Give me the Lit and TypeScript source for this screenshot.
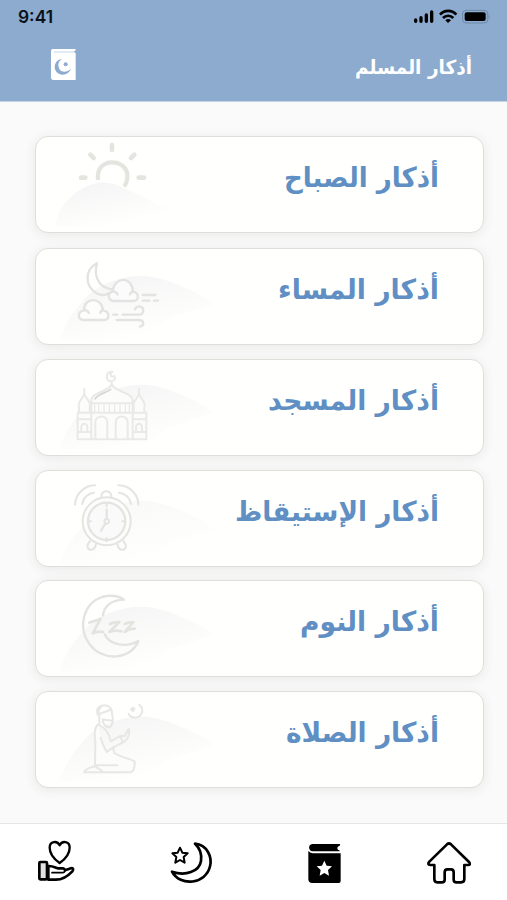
import { LitElement, html, css, svg } from "lit";
import { customElement, property } from "lit/decorators.js";

type Art = "sun" | "wind" | "mosque" | "alarm" | "sleep" | "prayer";

const wideHill = (y: number, strength = 1) => svg`
  <path transform="translate(0 ${y})" fill="url(#hill)" opacity=${strength}
    d="M90 200 C100 155 125 120 160 80 C200 30 270 8 330 6 C390 6 440 30 480 48 C515 62 530 76 550 90 C500 110 450 120 405 140 C380 165 350 186 320 200 Z"/>`;

const arts: Record<Art, { top: number; body: unknown }> = {
  sun: {
    top: 21,
    body: svg`
      <path fill="url(#hill)" d="M75 292 C82 240 110 205 150 180 C190 155 225 152 262 166 C300 182 350 208 420 240 C360 262 280 280 200 292 Z"/>
      <g stroke="#e5e5e0" stroke-width="13" stroke-linecap="butt">
        <path d="M204 150 C200 118 218 97 246 97 C276 97 294 118 292 142 C291 155 288 162 283 170"/>
        <path stroke-linecap="round" stroke-width="14" d="M246 45v15M181 74l10 10M313 74l-10 10M153 143h13M326 143h16"/>
      </g>`,
  },
  wind: {
    top: 27,
    body: svg`${wideHill(102)}
      <g stroke="#e3e3e1" stroke-width="7">
        <path d="M201 70 C166 88 160 138 202 161 C214 167 226 166 237 160 M201 70 C190 108 206 146 250 148"/>
        <path fill="#fbfbfb" d="M252 183 C234 182 230 160 248 154 C252 110 306 106 309 155 C328 158 328 183 310 183 Z"/>
        <path fill="#fdfdfc" d="M160 240 C142 238 142 214 162 211 C162 170 216 170 219 211 C240 214 240 240 222 240 Z"/>
        <path d="M162 211c8-2 12 2 14 8M219 211c-6 0-8 4-8 8M248 154c8 0 13 4 15 10M309 155c-6 0-8 4-9 8"/>
        <path d="M338 165h38M338 182h20M372 182h12M250 224h12M278 224H326C343 224 345 199 328 199C320 199 317 203 315 208M260 240H326C343 240 344 256 330 260"/>
      </g>`,
  },
  mosque: {
    top: 30,
    body: svg`${wideHill(98)}
      <g stroke="#e9e9e7" stroke-width="6">
        <path fill="#fcfcfb" stroke="none" d="M143 268V160L163 134L184 148Q190 130 245 108Q300 130 306 148L327 134L348 160V268Z"/>
        <path d="M143 268V188H349V268ZM143 208H184M308 208H349M143 246H184M308 246H349M184 160V268M308 160V268M184 160H308"/>
        <path stroke-width="4" d="M194 165v22M206 165v22M222 165v22M238 165v22M254 165v22M270 165v22M286 165v22M298 165v22"/>
        <path d="M184 158C178 126 228 130 245 104C262 130 312 126 308 158M147 187V172C141 152 159 150 163 130C167 150 185 152 179 172V187M311 187V172C305 152 323 150 327 130C331 150 349 152 343 172V187"/>
        <path d="M196 268V216C198 194 230 194 232 216V268M257 268V216C259 194 291 194 293 216V268M154 246V230C156 218 170 218 172 230V246M318 246V230C320 218 334 218 336 230V246"/>
        <path d="M163 117v10M327 117v10M245 94v8M243 65C226 68 226 92 243 94C254 94 257 84 253 78C244 84 236 74 247 65"/>
        <path stroke="#d6d7d5" stroke-width="5" d="M195 147C203 132 222 132 242 118"/>
      </g>`,
  },
  alarm: {
    top: 25,
    body: svg`${wideHill(108, 0.6)}
      <g stroke="#e4e4e1" stroke-width="6">
        <circle cx="230" cy="176" r="72" fill="#fdfdfc"/>
        <circle cx="230" cy="176" r="56" fill="#fafafa" stroke-width="7"/>
        <path d="M214 103C212 80 246 80 244 103M230 121v10M230 226v10M175 176h8M277 176h8"/>
        <circle cx="230" cy="176" r="7"/>
        <path d="M230 140v29M226 183L213 204" stroke-width="7"/>
        <path d="M135 126C136 96 162 68 195 68M157 124C159 106 174 92 192 90M265 68C300 68 325 96 325 126M267 90C286 92 300 106 303 124"/>
        <path d="M180 235C166 252 174 262 184 261C194 260 197 250 198 244M280 235C294 252 286 262 276 261C266 260 263 250 262 244"/>
      </g>`,
  },
  sleep: {
    top: 27,
    body: svg`${wideHill(98)}
      <g stroke="#e3e3e0" stroke-width="7">
        <path d="M219 130C222 104 242 84 282 83C264 70 236 70 216 75C160 94 142 166 178 216C220 272 304 262 325 207C292 226 240 222 224 187"/>
        <path stroke-width="8" d="M178 152C190 146 200 146 212 140L188 184C198 178 208 178 219 180M240 156C250 150 260 150 268 150L238 180C252 174 260 174 274 178M284 156C292 152 300 150 310 150L284 180C294 172 304 170 314 170"/>
      </g>`,
  },
  prayer: {
    top: 30,
    body: svg`${wideHill(98)}
      <g stroke="#e7e7e4" stroke-width="6">
        <path fill="#fcfcfb" d="M204 128C191 138 194 160 196 180L195 252C186 256 162 260 163 271H302C312 268 315 258 314 238C298 230 264 222 252 212L250 196L230 210C222 196 216 184 212 168"/>
        <path d="M204 128C226 136 238 156 242 178L270 162M250 196L285 178C296 168 300 152 296 140L284 162L270 162L278 178M197 250H262M195 252C206 264 216 262 218 270"/>
        <path d="M202 94C198 76 212 70 224 70C242 72 247 84 246 96C250 108 250 132 238 136C226 136 218 124 218 112M203 98L240 84M208 98V128M216 72C206 80 204 90 208 98M222 112C230 118 238 112 244 116"/>
        <path d="M328 68C344 82 336 106 316 107C306 107 299 103 296 96"/>
        <path stroke-width="8" d="M304 82l8-1M309 78v8"/>
      </g>`,
  },
};

@customElement("adhkar-card")
class AdhkarCard extends LitElement {
  @property() label = "";
  @property() art: Art = "sun";
  @property({ type: Number }) span = 150;

  static styles = css`
    :host {
      display: flex;
      box-sizing: border-box;
      justify-content: space-between;
      height: 97px;
      flex: none;
      border: 1px solid #dededa;
      border-radius: 13px;
      background: #fffffe;
      box-shadow: 0 2px 12px rgba(60, 60, 40, 0.09);
      overflow: hidden;
    }
    .art {
      width: 190px;
      height: 95px;
      flex: none;
    }
    .title {
      width: 210px;
      height: 80px;
      flex: none;
      margin-right: 44.500px;
      overflow: visible;
    }
    .title text {
      font: 700 27.500px "DejaVu Sans", "Noto Sans", sans-serif;
      fill: #5f8fc3;
    }
  `;

  render() {
    const art = arts[this.art];
    return html`
      <svg class="art" viewBox="18 ${art.top} 570 285" fill="none" stroke-linecap="round" stroke-linejoin="round">
        <defs>
          <linearGradient id="hill" x1="0.3" y1="0.1" x2="0.72" y2="0.85">
            <stop offset="0" stop-color="#f6f6f6" />
            <stop offset="1" stop-color="#fffffe" />
          </linearGradient>
        </defs>
        ${art.body}
      </svg>
      <svg class="title" viewBox="0 0 210 80">
        <text x="210" y="49.500" direction="rtl" textLength=${this.span} lengthAdjust="spacingAndGlyphs">${this.label}</text>
      </svg>
    `;
  }
}

@customElement("app-root")
class AppRoot extends LitElement {
  static styles = css`
    :host {
      display: flex;
      flex-direction: column;
      width: 507px;
      height: 900px;
      background: #fafafa;
      overflow: hidden;
    }
    .header {
      height: 101px;
      flex: none;
      background: #8cabce;
      border-bottom: 1px solid #c5d5e6;
      box-sizing: content-box;
    }
    .status {
      display: flex;
      justify-content: space-between;
      height: 32px;
      padding: 0 15px 0 18px;
    }
    .clock {
      font: 600 17.4px/34px Inter, sans-serif;
      color: #0b1118;
    }
    .signals {
      width: 82px;
      height: 22px;
      margin-top: 5px;
    }
    .bar {
      display: flex;
      justify-content: space-between;
      padding: 12px 35px 0 47px;
    }
    .quran {
      width: 32px;
      height: 40px;
    }
    .heading {
      width: 160px;
      height: 44px;
      overflow: visible;
    }
    .heading text {
      font: 700 19.5px "DejaVu Sans", "Noto Sans", sans-serif;
      fill: #fff;
    }
    .list {
      flex: 1;
      display: flex;
      flex-direction: column;
      gap: 13.8px;
      padding: 34px 23px 0 35px;
    }
    .list > :first-child {
      margin-bottom: 1.2px;
    }
    .nav {
      display: grid;
      grid-template-columns: 136px 133px 124px 44px;
      box-sizing: border-box;
      height: 77px;
      flex: none;
      padding: 16px 0 0 34px;
      border-top: 1px solid #e6e6e6;
      background: #fff;
    }
    .tab {
      width: 44px;
      height: 44px;
    }
  `;

  private tabs = [
    {
      x: 102,
      body: svg`
        <path stroke-width="7" d="M179 144C165 134 149 118 149 98C149 78 172 76 179 91C186 76 209 78 209 98C209 118 193 134 179 144Z"/>
        <rect x="118" y="141" width="23" height="52" rx="3" fill="#e2e2e2" stroke-width="8"/>
        <path stroke-width="8" d="M145 153C156 152 164 157 173 160H189Q194 161 195 166L213 160C220 158 221 164 217 169C202 185 186 194 168 194H145Z"/>
        <path stroke-width="5" d="M156 173H188Q194 173 195 166"/>`,
    },
    {
      x: 510,
      body: svg`
        <path stroke-width="8" d="M585 86C622 90 637 126 630 154C618 208 540 216 516 170C556 184 598 170 603 138C606 118 600 100 585 86Z"/>
        <path stroke-width="6" d="M540 98L547 113L563 115L551 126L554 143L540 135L526 143L529 126L517 115L533 113Z"/>`,
    },
    {
      x: 147,
      body: svg`
        <path fill="#000" stroke="none" d="M175 87H257Q260 88 257 92Q246 96 252 104Q260 108 256 109H176C163 109 161 88 175 87Z"/>
        <path fill="#000" stroke="none" d="M163 108Q168 114 176 115H260V198Q260 204 254 204H175Q163 204 163 193Z"/>
        <path fill="#fff" stroke="none" d="M211 137L218 152L234 154L222 165L225 182L211 174L197 182L200 165L188 154L204 152Z"/>`,
    },
    {
      x: 519,
      body: svg`
        <path stroke-width="8" d="M579 88Q585 83 591 88L645 141Q652 150 642 150H631V192Q631 202 621 202H608Q599 202 599 194V172Q599 163 591 163H580Q572 163 572 172V194Q572 202 563 202H550Q541 202 541 192V150H529Q519 149 526 140Z"/>`,
    },
  ];

  private cards: { label: string; art: Art; span: number }[] = [
    { label: "أذكار الصباح", art: "sun", span: 155 },
    { label: "أذكار المساء", art: "wind", span: 161 },
    { label: "أذكار المسجد", art: "mosque", span: 171 },
    { label: "أذكار الإستيقاظ", art: "alarm", span: 204 },
    { label: "أذكار النوم", art: "sleep", span: 139 },
    { label: "أذكار الصلاة", art: "prayer", span: 153 },
  ];

  render() {
    return html`
      <header class="header">
        <div class="status">
          <span class="clock">9:41</span>
          <svg class="signals" viewBox="468 15 246 66" fill="none">
            <path stroke="#000" stroke-width="10" stroke-linecap="round" d="M485 60v4M501 53v11M517 45v19M533 36v28" />
            <path stroke="#000" stroke-width="8" d="M558 44C572 29 593 29 607 44M567 54C576 45 589 45 598 54" />
            <path fill="#000" d="M574 61C579 56 586 56 591 61L582 69Z" />
            <rect x="625.500" y="31" width="76" height="38" rx="11" stroke="#6e89a7" stroke-width="3" />
            <rect x="632" y="37" width="63" height="26" rx="6" fill="#000" />
            <path fill="#6e89a7" d="M705 44Q710 50 705 56Z" />
          </svg>
        </div>
        <div class="bar">
          <svg class="quran" viewBox="141 132 96 120">
            <path fill="#fff" d="M158 147H227V151L221 155L227 160V240H160Q153 240 153 232V153Q153 147 158 147Z" />
            <path stroke="#c4d4e6" stroke-width="3" d="M162 156H221" />
            <path fill="#8cabce" d="M187 177C158 178 155 222 188 224C202 224 210 216 213 205C204 219 180 220 176 201C173 188 179 181 187 177Z" />
            <circle cx="197" cy="193" r="6" fill="#8cabce" />
          </svg>
          <svg class="heading" viewBox="0 0 160 44">
            <text x="160" y="30" direction="rtl" textLength="117" lengthAdjust="spacingAndGlyphs">أذكار المسلم</text>
          </svg>
        </div>
      </header>
      <main class="list">
        ${this.cards.map((c) => html`<adhkar-card .label=${c.label} .art=${c.art} .span=${c.span}></adhkar-card>`)}
      </main>
      <nav class="nav">
        ${this.tabs.map(
          (t) => html`<svg class="tab" viewBox="${t.x} 75 132 132" fill="none" stroke="#000" stroke-linejoin="round" stroke-linecap="round">${t.body}</svg>`,
        )}
      </nav>
    `;
  }
}
